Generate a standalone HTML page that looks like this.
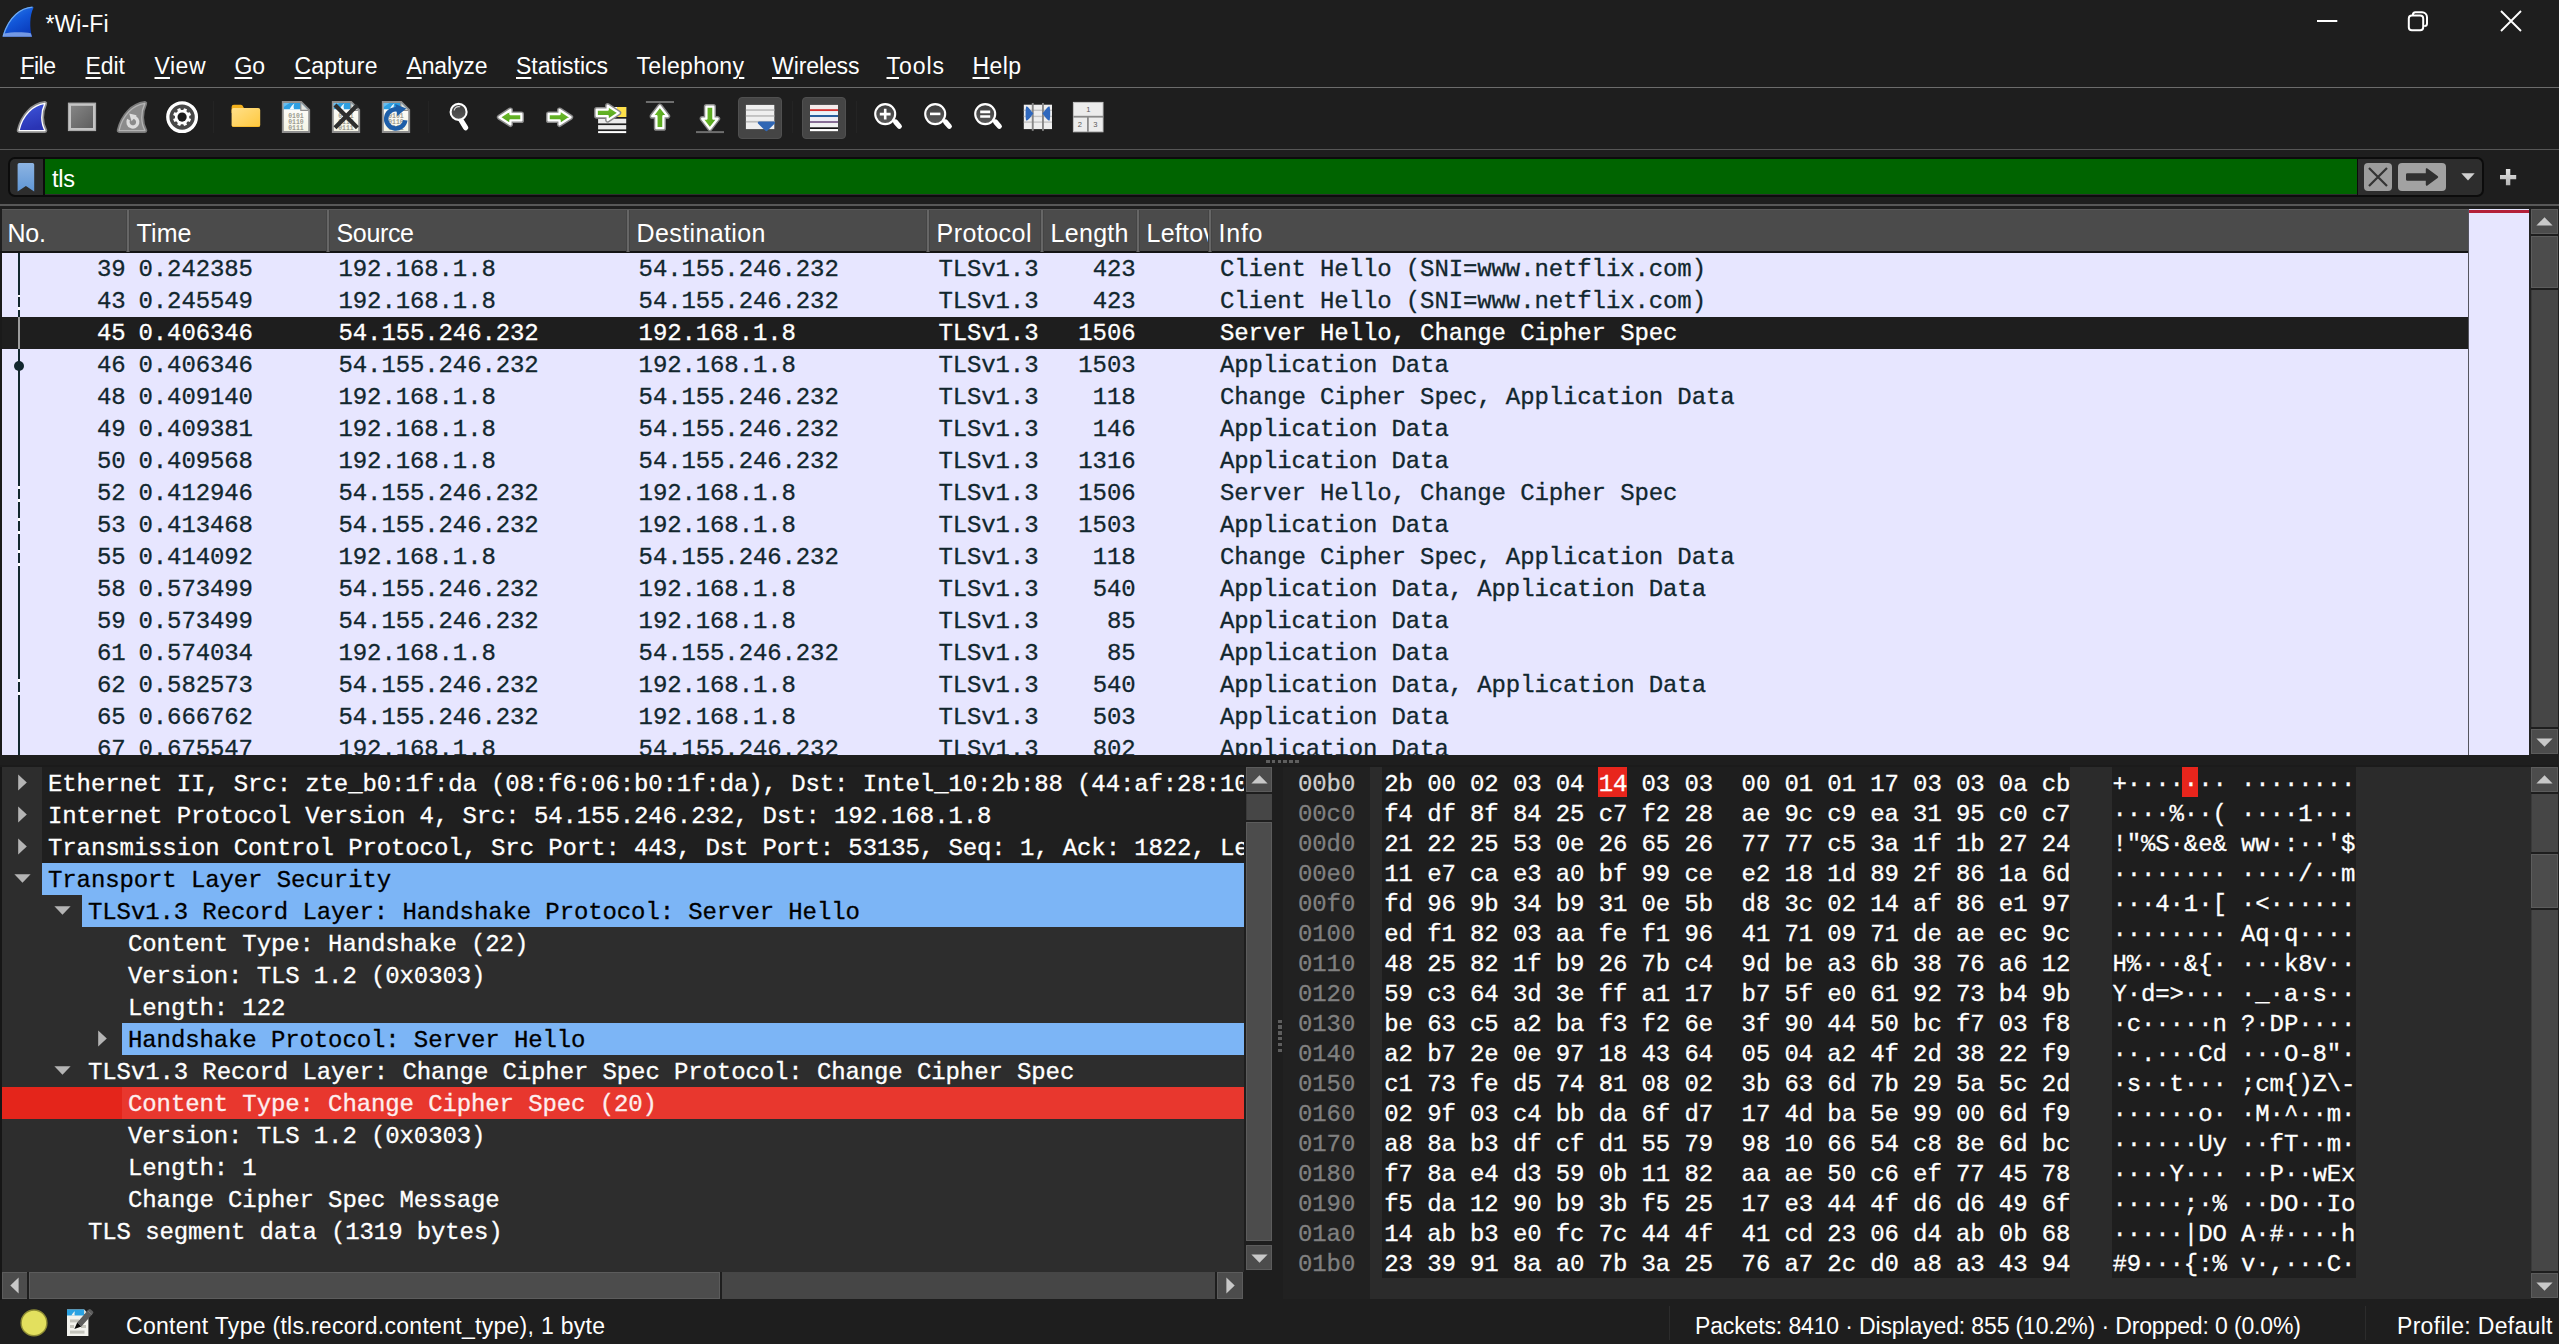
<!DOCTYPE html>
<html><head><meta charset="utf-8"><title>*Wi-Fi</title>
<style>
html,body{margin:0;padding:0}
body{width:2559px;height:1344px;background:#1e1e1e;position:relative;overflow:hidden;font-family:"Liberation Sans",sans-serif}
div,span,svg{position:absolute;box-sizing:border-box}
.s{font-family:"Liberation Sans",sans-serif;white-space:pre}
.s u{text-decoration:underline;text-decoration-thickness:2px;text-underline-offset:3px}
.m{font-family:"Liberation Mono",monospace;font-size:24px;letter-spacing:-0.11px;line-height:32px;white-space:pre;-webkit-text-stroke:0.3px currentColor}
.clip{overflow:hidden}
</style></head><body>

<svg style="left:0;top:4px" width="38" height="36" viewBox="0 0 38 36">
<defs><linearGradient id="tf" x1="0" y1="0" x2="0.6" y2="1"><stop offset="0" stop-color="#2f86ee"/><stop offset="0.55" stop-color="#1256d8"/><stop offset="1" stop-color="#0a3cbc"/></linearGradient></defs>
<path d="M32.6 2.8 C21 3.5 8.5 12 2.5 32.8 L32 32.8 C29.5 24 29.5 12 33.6 3.6 Z" fill="url(#tf)"/>
<path d="M32.4 3.2 C21 4 9 12.5 3.2 32" fill="none" stroke="#78b2f4" stroke-width="1.3" opacity="0.9"/>
<path d="M4.2 29.5 C12 27.8 24 28 30.8 29.2 L32 32.8 L2.5 32.8 Z" fill="#86a8ea" opacity="0.85"/>
</svg>
<span class="s" style="left:45.5px;top:8.03px;font-size:23px;line-height:32px;color:#fff;letter-spacing:0.083px;">*Wi-Fi</span>
<svg style="left:2300px;top:0" width="259" height="44" viewBox="0 0 259 44" fill="none" stroke="#fff" stroke-width="2">
<path d="M17 21 H37.3"/>
<path d="M112.9 15.2 V14.7 a2.5 2.5 0 0 1 2.5 -2.5 H122 a5 5 0 0 1 5 5 V23.4 a2.5 2.5 0 0 1 -2.5 2.5 H124.2" stroke-width="2"/>
<rect x="108.8" y="15.6" width="14.4" height="14.6" rx="3"/>
<path d="M201 11 L221 31 M221 11 L201 31" stroke-width="1.9"/>
</svg>
<span class="s" style="left:20.5px;top:50.03px;font-size:23px;line-height:32px;color:#fff;letter-spacing:-0.521px;"><u>F</u>ile</span>
<span class="s" style="left:85.5px;top:50.03px;font-size:23px;line-height:32px;color:#fff;letter-spacing:-0.044px;"><u>E</u>dit</span>
<span class="s" style="left:154.5px;top:50.03px;font-size:23px;line-height:32px;color:#fff;letter-spacing:0.521px;"><u>V</u>iew</span>
<span class="s" style="left:234.5px;top:50.03px;font-size:23px;line-height:32px;color:#fff;letter-spacing:-0.184px;"><u>G</u>o</span>
<span class="s" style="left:294.5px;top:50.03px;font-size:23px;line-height:32px;color:#fff;letter-spacing:0.195px;"><u>C</u>apture</span>
<span class="s" style="left:406.5px;top:50.03px;font-size:23px;line-height:32px;color:#fff;letter-spacing:-0.138px;"><u>A</u>nalyze</span>
<span class="s" style="left:516.0px;top:50.03px;font-size:23px;line-height:32px;color:#fff;letter-spacing:-0.003px;"><u>S</u>tatistics</span>
<span class="s" style="left:636.5px;top:50.03px;font-size:23px;line-height:32px;color:#fff;letter-spacing:0.329px;">Telephon<u>y</u></span>
<span class="s" style="left:772.0px;top:50.03px;font-size:23px;line-height:32px;color:#fff;letter-spacing:-0.096px;"><u>W</u>ireless</span>
<span class="s" style="left:886.5px;top:50.03px;font-size:23px;line-height:32px;color:#fff;letter-spacing:0.951px;"><u>T</u>ools</span>
<span class="s" style="left:972.5px;top:50.03px;font-size:23px;line-height:32px;color:#fff;letter-spacing:0.398px;"><u>H</u>elp</span>
<div style="left:0px;top:87px;width:2559px;height:1px;background:#6c6c6c;"></div>
<div style="left:0px;top:149px;width:2559px;height:1.2px;background:#565656;"></div>
<svg width="0" height="0" style="left:0;top:0"><defs>
<linearGradient id="gBlue" x1="0" y1="0" x2="0.3" y2="1"><stop offset="0" stop-color="#3f58de"/><stop offset="1" stop-color="#2a34b4"/></linearGradient>
<linearGradient id="gStop" x1="0" y1="0" x2="1" y2="1"><stop offset="0" stop-color="#858585"/><stop offset="1" stop-color="#5e5e5e"/></linearGradient>
<linearGradient id="gFold" x1="0" y1="0" x2="1" y2="1"><stop offset="0" stop-color="#ffe08a"/><stop offset="1" stop-color="#ffc83d"/></linearGradient>
<linearGradient id="gGreenH" x1="0" y1="0" x2="0" y2="1"><stop offset="0" stop-color="#74c22e"/><stop offset="1" stop-color="#4fa01c"/></linearGradient>
<linearGradient id="gGreenV" x1="0" y1="0" x2="1" y2="0"><stop offset="0" stop-color="#74c22e"/><stop offset="1" stop-color="#4c9c1a"/></linearGradient>
<linearGradient id="gLens" x1="0" y1="0" x2="0" y2="1"><stop offset="0" stop-color="#3e3e3e"/><stop offset="1" stop-color="#5a5a5a"/></linearGradient>
<linearGradient id="gPage" x1="0" y1="0" x2="0" y2="1"><stop offset="0" stop-color="#ffffff"/><stop offset="1" stop-color="#f4f3e4"/></linearGradient>
</defs></svg>
<div style="left:738px;top:97px;width:44px;height:42px;background:#454545;border-radius:4px;border:1px solid #505050;"></div>
<div style="left:802px;top:97px;width:44px;height:42px;background:#454545;border-radius:4px;border:1px solid #505050;"></div>
<div style="left:213px;top:101px;width:1px;height:32px;background:#242424;"></div>
<div style="left:428px;top:101px;width:1px;height:32px;background:#242424;"></div>
<div style="left:792px;top:101px;width:1px;height:32px;background:#242424;"></div>
<div style="left:856px;top:101px;width:1px;height:32px;background:#242424;"></div>
<svg style="left:16px;top:101px;overflow:visible" width="32" height="32" viewBox="0 0 32 32"><path d="M28.9 2.4 C17 4 6.5 14 3 29.6 L29 29.6 C24.8 22 24.6 11.5 28.9 2.4 Z" fill="none" stroke="#8c8c8c" stroke-width="4.6" stroke-linejoin="round"/>
<path d="M28.9 2.4 C17 4 6.5 14 3 29.6 L29 29.6 C24.8 22 24.6 11.5 28.9 2.4 Z" fill="url(#gBlue)" stroke="#ffffff" stroke-width="1.3" stroke-linejoin="round"/></svg>
<svg style="left:66px;top:101px;overflow:visible" width="32" height="32" viewBox="0 0 32 32"><rect x="1.9" y="1.7" width="28.2" height="28.4" fill="#c6c6c6"/>
<rect x="2.6" y="2.4" width="26.8" height="27" fill="none" stroke="#a8a8a8" stroke-width="1"/>
<rect x="5" y="4.8" width="22" height="22.2" fill="url(#gStop)"/></svg>
<svg style="left:116px;top:101px;overflow:visible" width="32" height="32" viewBox="0 0 32 32"><path d="M28.9 2.4 C17 4 6.5 14 3 29.6 L29 29.6 C24.8 22 24.6 11.5 28.9 2.4 Z" fill="none" stroke="#7a7a7a" stroke-width="4.6" stroke-linejoin="round"/>
<path d="M28.9 2.4 C17 4 6.5 14 3 29.6 L29 29.6 C24.8 22 24.6 11.5 28.9 2.4 Z" fill="#8b8b8b" stroke="#b4b4b4" stroke-width="1.3" stroke-linejoin="round"/>
<path d="M12.6 18.6 A4.9 4.9 0 1 0 17.4 16.2" fill="none" stroke="#dcdcdc" stroke-width="3.3"/>
<path d="M13.2 12.6 L20.6 14.2 L15.6 20.2 Z" fill="#dcdcdc"/></svg>
<svg style="left:166px;top:101px;overflow:visible" width="32" height="32" viewBox="0 0 32 32"><circle cx="16.1" cy="16.1" r="14.3" fill="#484848" stroke="#ffffff" stroke-width="3.3"/>
<path d="M25.16 14.52 L25.16 17.68 L23.10 17.78 L22.24 19.86 L23.63 21.39 L21.39 23.63 L19.86 22.24 L17.78 23.10 L17.68 25.16 L14.52 25.16 L14.42 23.10 L12.34 22.24 L10.81 23.63 L8.57 21.39 L9.96 19.86 L9.10 17.78 L7.04 17.68 L7.04 14.52 L9.10 14.42 L9.96 12.34 L8.57 10.81 L10.81 8.57 L12.34 9.96 L14.42 9.10 L14.52 7.04 L17.68 7.04 L17.78 9.10 L19.86 9.96 L21.39 8.57 L23.63 10.81 L22.24 12.34 L23.10 14.42 Z" fill="#ffffff" transform="rotate(22.5 16.1 16.1)"/>
<circle cx="16.1" cy="16.1" r="4.6" fill="#1c1c1c"/></svg>
<svg style="left:230px;top:101px;overflow:visible" width="32" height="32" viewBox="0 0 32 32"><path d="M1.6 6 a2.3 2.3 0 0 1 2.3 -2.3 H10.6 a2.4 2.4 0 0 1 1.9 0.9 L13.9 7 H20 V12 H1.6 Z" fill="#f2b01c"/>
<rect x="1.6" y="6.9" width="28.6" height="19.2" rx="2" fill="url(#gFold)"/>
<path d="M3.6 26.1 H28.2 a2 2 0 0 0 2 -2 V23.4 a2 2 0 0 1 -2 2 H3.6 a2 2 0 0 1 -2 -2 V24.1 a2 2 0 0 0 2 2 Z" fill="#f0a80e"/></svg>
<svg style="left:280px;top:101px;overflow:visible" width="32" height="32" viewBox="0 0 32 32"><path d="M2.8 1 H21.2 L29.2 9 V31 H2.8 Z" fill="url(#gPage)" stroke="#8f8f8f" stroke-width="1.9" stroke-linejoin="miter"/>
<path d="M3.8 2 H20.8 L27 8.2 H3.8 Z" fill="#2d9fe2"/>
<path d="M3.8 2 H9.5 L3.8 6 Z" fill="#66bdf0"/>
<path d="M9.6 8.2 C11 5.4 12.6 3.6 14.4 2.4 C13.4 4.6 13.4 6.4 14.2 8.2 Z" fill="#f4fbff"/>
<path d="M20.8 2 L20.8 9.4 L28.2 9.4" fill="#e6e6e0" stroke="#8f8f8f" stroke-width="1.2"/><g fill="#9c9c92" font-family="Liberation Mono" font-size="6.8" font-weight="bold"><text x="8.2" y="16.9" textLength="15.5" lengthAdjust="spacingAndGlyphs">0101</text><text x="8.2" y="23.0" textLength="15.5" lengthAdjust="spacingAndGlyphs">0110</text><text x="8.2" y="29.1" textLength="15.5" lengthAdjust="spacingAndGlyphs">0111</text></g></svg>
<svg style="left:330px;top:101px;overflow:visible" width="32" height="32" viewBox="0 0 32 32"><path d="M2.8 1 H21.2 L29.2 9 V31 H2.8 Z" fill="url(#gPage)" stroke="#8f8f8f" stroke-width="1.9" stroke-linejoin="miter"/>
<path d="M3.8 2 H20.8 L27 8.2 H3.8 Z" fill="#2d9fe2"/>
<path d="M3.8 2 H9.5 L3.8 6 Z" fill="#66bdf0"/>
<path d="M9.6 8.2 C11 5.4 12.6 3.6 14.4 2.4 C13.4 4.6 13.4 6.4 14.2 8.2 Z" fill="#f4fbff"/>
<path d="M20.8 2 L20.8 9.4 L28.2 9.4" fill="#e6e6e0" stroke="#8f8f8f" stroke-width="1.2"/><g fill="#9c9c92" font-family="Liberation Mono" font-size="6.8" font-weight="bold"><text x="8.2" y="16.9" textLength="15.5" lengthAdjust="spacingAndGlyphs">0101</text><text x="8.2" y="23.0" textLength="15.5" lengthAdjust="spacingAndGlyphs">0110</text><text x="8.2" y="29.1" textLength="15.5" lengthAdjust="spacingAndGlyphs">0111</text></g><path d="M5 4 L27.4 26.8 M27.4 4 L5 26.8" stroke="#2e2e2e" stroke-width="4.2" fill="none"/></svg>
<svg style="left:380px;top:101px;overflow:visible" width="32" height="32" viewBox="0 0 32 32"><path d="M2.8 1 H21.2 L29.2 9 V31 H2.8 Z" fill="url(#gPage)" stroke="#8f8f8f" stroke-width="1.9" stroke-linejoin="miter"/>
<path d="M3.8 2 H20.8 L27 8.2 H3.8 Z" fill="#2d9fe2"/>
<path d="M3.8 2 H9.5 L3.8 6 Z" fill="#66bdf0"/>
<path d="M9.6 8.2 C11 5.4 12.6 3.6 14.4 2.4 C13.4 4.6 13.4 6.4 14.2 8.2 Z" fill="#f4fbff"/>
<path d="M20.8 2 L20.8 9.4 L28.2 9.4" fill="#e6e6e0" stroke="#8f8f8f" stroke-width="1.2"/><g fill="#9c9c92" font-family="Liberation Mono" font-size="6.8" font-weight="bold"><text x="8.2" y="16.9" textLength="15.5" lengthAdjust="spacingAndGlyphs">0101</text><text x="8.2" y="23.0" textLength="15.5" lengthAdjust="spacingAndGlyphs">0110</text><text x="8.2" y="29.1" textLength="15.5" lengthAdjust="spacingAndGlyphs">0111</text></g><path d="M25.3 19.2 A9.6 9.6 0 1 1 18.6 8.7" fill="none" stroke="#1d5ea8" stroke-width="4.5"/>
<path d="M15.2 3 L26.2 7.4 L17.4 15 Z" fill="#1d5ea8"/></svg>
<svg style="left:444px;top:101px;overflow:visible" width="32" height="32" viewBox="0 0 32 32"><g transform="translate(2.2 -0.3)"><path d="M13.8 17.8 L19.4 27" stroke="#ffffff" stroke-width="5.2" stroke-linecap="round" fill="none"/>
<circle cx="12.4" cy="11.2" r="8" fill="url(#gLens)" stroke="#ffffff" stroke-width="2.1"/>
<path d="M8 9.4 A5 5 0 0 1 13.6 6" fill="none" stroke="#d8d8d8" stroke-width="1.1" stroke-linecap="round"/></g></svg>
<svg style="left:494px;top:101px;overflow:visible" width="32" height="32" viewBox="0 0 32 32"><g transform="translate(32 0) scale(-1 1)"><g transform="translate(0 0) scale(1)"><path d="M4.6 13 H15.6 V9 L26.6 16.2 L15.6 23.4 V19.4 H4.6 Z" fill="none" stroke="#8a8a8a" stroke-width="5.2" stroke-linejoin="round"/>
<path d="M4.6 13 H15.6 V9 L26.6 16.2 L15.6 23.4 V19.4 H4.6 Z" fill="url(#gGreenH)" stroke="#ffffff" stroke-width="2.3" stroke-linejoin="round"/></g></g></svg>
<svg style="left:544px;top:101px;overflow:visible" width="32" height="32" viewBox="0 0 32 32"><g transform="translate(0 0) scale(1)"><path d="M4.6 13 H15.6 V9 L26.6 16.2 L15.6 23.4 V19.4 H4.6 Z" fill="none" stroke="#8a8a8a" stroke-width="5.2" stroke-linejoin="round"/>
<path d="M4.6 13 H15.6 V9 L26.6 16.2 L15.6 23.4 V19.4 H4.6 Z" fill="url(#gGreenH)" stroke="#ffffff" stroke-width="2.3" stroke-linejoin="round"/></g></svg>
<svg style="left:594px;top:101px;overflow:visible" width="32" height="32" viewBox="0 0 32 32"><rect x="4.1" y="6" width="28.1" height="10" fill="#ffffff"/>
<rect x="23" y="6" width="9.2" height="10" fill="#ffe14a"/>
<rect x="4.1" y="17.7" width="28.1" height="4.7" fill="#ececec"/>
<rect x="4.1" y="24.1" width="28.1" height="4.3" fill="#ececec"/>
<rect x="4.1" y="30.1" width="28.1" height="2" fill="#ffffff"/>
<g transform="translate(-1.9 -4.3)"><path d="M4.6 13 H15.6 V9 L26.6 16.2 L15.6 23.4 V19.4 H4.6 Z" fill="none" stroke="#8a8a8a" stroke-width="5.2" stroke-linejoin="round"/>
<path d="M4.6 13 H15.6 V9 L26.6 16.2 L15.6 23.4 V19.4 H4.6 Z" fill="url(#gGreenH)" stroke="#ffffff" stroke-width="2.3" stroke-linejoin="round"/></g></svg>
<svg style="left:644px;top:101px;overflow:visible" width="32" height="32" viewBox="0 0 32 32"><rect x="1.9" y="0" width="28.1" height="2" fill="#6e6e6e"/>
<path d="M15.9 5.2 L23.6 15.2 H19.4 V27.2 H12.4 V15.2 H8.2 Z" fill="none" stroke="#8a8a8a" stroke-width="5.2" stroke-linejoin="round"/>
<path d="M15.9 5.2 L23.6 15.2 H19.4 V27.2 H12.4 V15.2 H8.2 Z" fill="url(#gGreenV)" stroke="#ffffff" stroke-width="2.3" stroke-linejoin="round"/></svg>
<svg style="left:694px;top:101px;overflow:visible" width="32" height="32" viewBox="0 0 32 32"><rect x="2" y="30.1" width="28" height="2" fill="#6e6e6e"/>
<g transform="translate(0 32.9) scale(1 -1)"><path d="M15.9 5.2 L23.6 15.2 H19.4 V27.2 H12.4 V15.2 H8.2 Z" fill="none" stroke="#8a8a8a" stroke-width="5.2" stroke-linejoin="round"/>
<path d="M15.9 5.2 L23.6 15.2 H19.4 V27.2 H12.4 V15.2 H8.2 Z" fill="url(#gGreenV)" stroke="#ffffff" stroke-width="2.3" stroke-linejoin="round"/></g></svg>
<svg style="left:744px;top:101px;overflow:visible" width="32" height="32" viewBox="0 0 32 32"><rect x="1.9" y="3.9" width="28.4" height="24.2" fill="#efefef"/>
<rect x="1.9" y="8.2" width="28.4" height="1.7" fill="#bdbdbd"/>
<rect x="1.9" y="14.1" width="28.4" height="1.7" fill="#bdbdbd"/>
<rect x="1.9" y="19.9" width="28.4" height="1.7" fill="#bdbdbd"/>
<path d="M15 20.6 H29.8 a1.2 1.2 0 0 1 1 1.9 L23.6 29.6 a1.6 1.6 0 0 1 -2.4 0 L14 22.5 a1.2 1.2 0 0 1 1 -1.9 Z" fill="#2f66b4"/></svg>
<svg style="left:808px;top:101px;overflow:visible" width="32" height="32" viewBox="0 0 32 32"><rect x="2" y="3.9" width="28" height="26.2" fill="#f4ecec"/>
<rect x="2" y="8.2" width="28" height="2" fill="#d43030"/>
<rect x="2" y="10.2" width="28" height="3.8" fill="#e9f3fb"/>
<rect x="2" y="14" width="28" height="2.1" fill="#2a5d9c"/>
<rect x="2" y="16.1" width="28" height="4" fill="#f1eef6"/>
<rect x="2" y="20.2" width="28" height="1.7" fill="#6e4f80"/>
<rect x="2" y="21.9" width="28" height="4.4" fill="#f2f2f2"/>
<rect x="2" y="26.3" width="28" height="1.8" fill="#151515"/>
<rect x="2" y="28.1" width="28" height="2" fill="#ffffff"/></svg>
<svg style="left:872px;top:101px;overflow:visible" width="32" height="32" viewBox="0 0 32 32"><path d="M23.6 21 L27.4 25.4" stroke="#ffffff" stroke-width="5" stroke-linecap="round" fill="none"/>
<path d="M19 17 L24 21.6" stroke="#ffffff" stroke-width="3" fill="none"/>
<circle cx="13.2" cy="13.1" r="10" fill="url(#gLens)" stroke="#ffffff" stroke-width="2.1"/><path d="M7.8 13.1 H18.6 M13.2 7.7 V18.5" stroke="#ffffff" stroke-width="2.6" fill="none"/></svg>
<svg style="left:922px;top:101px;overflow:visible" width="32" height="32" viewBox="0 0 32 32"><path d="M23.6 21 L27.4 25.4" stroke="#ffffff" stroke-width="5" stroke-linecap="round" fill="none"/>
<path d="M19 17 L24 21.6" stroke="#ffffff" stroke-width="3" fill="none"/>
<circle cx="13.2" cy="13.1" r="10" fill="url(#gLens)" stroke="#ffffff" stroke-width="2.1"/><path d="M8 12.9 H18.4" stroke="#ffffff" stroke-width="2.6" fill="none"/></svg>
<svg style="left:972px;top:101px;overflow:visible" width="32" height="32" viewBox="0 0 32 32"><path d="M23.6 21 L27.4 25.4" stroke="#ffffff" stroke-width="5" stroke-linecap="round" fill="none"/>
<path d="M19 17 L24 21.6" stroke="#ffffff" stroke-width="3" fill="none"/>
<circle cx="13.2" cy="13.1" r="10" fill="url(#gLens)" stroke="#ffffff" stroke-width="2.1"/><path d="M8.2 10.9 H18.2 M8.2 15.5 H18.2" stroke="#ffffff" stroke-width="2.6" fill="none"/></svg>
<svg style="left:1022px;top:101px;overflow:visible" width="32" height="32" viewBox="0 0 32 32"><rect x="1.8" y="3.7" width="28.2" height="24.4" fill="#eeeeee"/>
<rect x="1.8" y="8.6" width="28.2" height="1.4" fill="#c4c4c4"/>
<rect x="1.8" y="14.7" width="28.2" height="1.4" fill="#c4c4c4"/>
<rect x="1.8" y="20.4" width="28.2" height="1.4" fill="#c4c4c4"/>
<rect x="9.8" y="2" width="1.9" height="27.8" fill="#878787"/>
<rect x="20" y="2" width="1.9" height="27.8" fill="#878787"/>
<path d="M4.2 5.4 C6 5.4 7 7 11.4 12.4 C7 17.8 6 19.6 4.2 19.6 C3.4 17 3.4 8 4.2 5.4 Z" fill="#2f68bd"/>
<path d="M27.6 5.4 C25.8 5.4 24.8 7 20.4 12.4 C24.8 17.8 25.8 19.6 27.6 19.6 C28.4 17 28.4 8 27.6 5.4 Z" fill="#2f68bd"/></svg>
<svg style="left:1072px;top:101px;overflow:visible" width="32" height="32" viewBox="0 0 32 32"><rect x="1.4" y="1.4" width="29.6" height="29.4" fill="#ececec" stroke="#c2c2c2" stroke-width="1"/>
<rect x="1.4" y="14.8" width="29.6" height="1.8" fill="#8a8a8a"/>
<rect x="15" y="15.6" width="1.8" height="15.2" fill="#8a8a8a"/>
<g fill="#5a5a5a" font-family="Liberation Sans" font-size="7.6">
<text x="14.2" y="11.2">1</text><text x="5.8" y="26.2">2</text><text x="21.2" y="26.2">3</text></g></svg>
<div style="left:8px;top:157px;width:2476px;height:40px;background:#0c0c0c;border-radius:7px;"></div>
<div style="left:10px;top:159px;width:2472px;height:36px;background:#2d2d2d;border-radius:5px;"></div>
<div style="left:44.5px;top:159.3px;width:2312.3px;height:35.2px;background:#006400;"></div>
<div style="left:43px;top:159px;width:1.5px;height:36px;background:#0c0c0c;"></div>
<div style="left:2356.8px;top:159px;width:1.5px;height:36px;background:#0c0c0c;"></div>
<svg style="left:16px;top:162px" width="20" height="30" viewBox="0 0 20 30"><defs><linearGradient id="bm" x1="0" y1="0" x2="0" y2="1"><stop offset="0" stop-color="#8db4e2"/><stop offset="1" stop-color="#5f96d6"/></linearGradient></defs><path d="M1.6 2.6 a1.6 1.6 0 0 1 1.6 -1.6 H16.6 a1.6 1.6 0 0 1 1.6 1.6 V29.6 L9.9 24 L1.6 29.6 Z" fill="url(#bm)"/></svg>
<span class="s" style="left:52px;top:162.76px;font-size:23.5px;line-height:33px;color:#fff;letter-spacing:-0.250px;">tls</span>
<div style="left:2364px;top:163px;width:28px;height:28px;background:#9d9d9d;border-radius:4px;"></div>
<svg style="left:2364px;top:163px" width="28" height="28" viewBox="0 0 28 28"><path d="M5 5 L23 23 M23 5 L5 23" stroke="#333" stroke-width="2.2" fill="none"/></svg>
<div style="left:2398px;top:163px;width:48.3px;height:28px;background:#a2a2a2;border-radius:4px;"></div>
<svg style="left:2398px;top:163px" width="48" height="28" viewBox="0 0 48 28"><path d="M9.4 10.2 H27.8 V6.2 a1 1 0 0 1 1.6 -0.8 L39.6 12.9 a1.4 1.4 0 0 1 0 2.2 L29.4 22.6 a1 1 0 0 1 -1.6 -0.8 V17.8 H9.4 a1.4 1.4 0 0 1 -1.4 -1.4 V11.6 a1.4 1.4 0 0 1 1.4 -1.4 Z" fill="#303030"/></svg>
<svg style="left:2461px;top:173px" width="14" height="8" viewBox="0 0 14 8"><path d="M0.3 0.2 H13.7 L7 7.4 Z" fill="#d0d0d0"/></svg>
<svg style="left:2499px;top:168px" width="18" height="18" viewBox="0 0 18 18"><defs><linearGradient id="pl" x1="0" y1="0" x2="0" y2="1"><stop offset="0" stop-color="#e4e4e4"/><stop offset="1" stop-color="#b4b4b4"/></linearGradient></defs><path d="M6.9 1 H11.3 V6.9 H17.2 V11.3 H11.3 V17.2 H6.9 V11.3 H1 V6.9 H6.9 Z" fill="url(#pl)"/></svg>
<div style="left:0px;top:204px;width:2559px;height:2.4px;background:#585858;"></div>
<div style="left:2px;top:209px;width:2466px;height:42px;background:#4b4b4b;"></div>
<div style="left:2px;top:209px;width:2466px;height:1px;background:#5a5a5a;"></div>
<div style="left:0px;top:250.6px;width:2468px;height:2.4px;background:#141414;"></div>
<span class="s" style="left:7.4px;top:215.64px;font-size:25px;line-height:35px;color:#fff;letter-spacing:-0.151px;">No.</span>
<span class="s" style="left:136.5px;top:215.64px;font-size:25px;line-height:35px;color:#fff;letter-spacing:0.125px;">Time</span>
<span class="s" style="left:336.5px;top:215.64px;font-size:25px;line-height:35px;color:#fff;letter-spacing:-0.341px;">Source</span>
<span class="s" style="left:636.5px;top:215.64px;font-size:25px;line-height:35px;color:#fff;letter-spacing:0.393px;">Destination</span>
<span class="s" style="left:936.5px;top:215.64px;font-size:25px;line-height:35px;color:#fff;letter-spacing:0.470px;">Protocol</span>
<span class="s" style="left:1050.5px;top:215.64px;font-size:25px;line-height:35px;color:#fff;letter-spacing:0.309px;">Length</span>
<div class="clip" style="left:1146.5px;top:209px;width:62.09999999999991px;height:42px">
<span class="s" style="left:0px;top:6.64px;font-size:25px;line-height:35px;color:#fff;letter-spacing:0.239px;">Leftover</span>
</div>
<span class="s" style="left:1218.5px;top:215.64px;font-size:25px;line-height:35px;color:#fff;letter-spacing:0.768px;">Info</span>
<div style="left:126.3px;top:210px;width:4px;height:42px;background:#444444;"></div>
<div style="left:127.3px;top:210px;width:1.8px;height:42px;background:#666666;"></div>
<div style="left:326.3px;top:210px;width:4px;height:42px;background:#444444;"></div>
<div style="left:327.3px;top:210px;width:1.8px;height:42px;background:#666666;"></div>
<div style="left:626.3px;top:210px;width:4px;height:42px;background:#444444;"></div>
<div style="left:627.3px;top:210px;width:1.8px;height:42px;background:#666666;"></div>
<div style="left:926.3px;top:210px;width:4px;height:42px;background:#444444;"></div>
<div style="left:927.3px;top:210px;width:1.8px;height:42px;background:#666666;"></div>
<div style="left:1040.3px;top:210px;width:4px;height:42px;background:#444444;"></div>
<div style="left:1041.3px;top:210px;width:1.8px;height:42px;background:#666666;"></div>
<div style="left:1136.4px;top:210px;width:4px;height:42px;background:#444444;"></div>
<div style="left:1137.4px;top:210px;width:1.8px;height:42px;background:#666666;"></div>
<div style="left:1208.3px;top:210px;width:4px;height:42px;background:#444444;"></div>
<div style="left:1209.3px;top:210px;width:1.8px;height:42px;background:#666666;"></div>
<div style="left:0px;top:253px;width:2px;height:502px;background:#1a1a1a;"></div>
<div style="left:2px;top:253px;width:2466px;height:502px;background:#e7e6ff;"></div>
<div class="clip" style="left:2px;top:253px;width:2466px;height:502px">
<span class="m" style="left:95.02px;top:1.46px;color:#12272e;">39</span>
<span class="m" style="left:136.5px;top:1.46px;color:#12272e;">0.242385</span>
<span class="m" style="left:336.5px;top:1.46px;color:#12272e;">192.168.1.8</span>
<span class="m" style="left:636.6px;top:1.46px;color:#12272e;">54.155.246.232</span>
<span class="m" style="left:936.4px;top:1.46px;color:#12272e;">TLSv1.3</span>
<span class="m" style="left:1090.63px;top:1.46px;color:#12272e;">423</span>
<span class="m" style="left:1218px;top:1.46px;color:#12272e;">Client Hello (SNI=www.netflix.com)</span>
<span class="m" style="left:95.02px;top:33.46px;color:#12272e;">43</span>
<span class="m" style="left:136.5px;top:33.46px;color:#12272e;">0.245549</span>
<span class="m" style="left:336.5px;top:33.46px;color:#12272e;">192.168.1.8</span>
<span class="m" style="left:636.6px;top:33.46px;color:#12272e;">54.155.246.232</span>
<span class="m" style="left:936.4px;top:33.46px;color:#12272e;">TLSv1.3</span>
<span class="m" style="left:1090.63px;top:33.46px;color:#12272e;">423</span>
<span class="m" style="left:1218px;top:33.46px;color:#12272e;">Client Hello (SNI=www.netflix.com)</span>
<div style="left:0px;top:64px;width:2466px;height:32px;background:#1e1e1e;"></div>
<span class="m" style="left:95.02px;top:65.46px;color:#ffffff;">45</span>
<span class="m" style="left:136.5px;top:65.46px;color:#ffffff;">0.406346</span>
<span class="m" style="left:336.5px;top:65.46px;color:#ffffff;">54.155.246.232</span>
<span class="m" style="left:636.6px;top:65.46px;color:#ffffff;">192.168.1.8</span>
<span class="m" style="left:936.4px;top:65.46px;color:#ffffff;">TLSv1.3</span>
<span class="m" style="left:1076.34px;top:65.46px;color:#ffffff;">1506</span>
<span class="m" style="left:1218px;top:65.46px;color:#ffffff;">Server Hello, Change Cipher Spec</span>
<span class="m" style="left:95.02px;top:97.46px;color:#12272e;">46</span>
<span class="m" style="left:136.5px;top:97.46px;color:#12272e;">0.406346</span>
<span class="m" style="left:336.5px;top:97.46px;color:#12272e;">54.155.246.232</span>
<span class="m" style="left:636.6px;top:97.46px;color:#12272e;">192.168.1.8</span>
<span class="m" style="left:936.4px;top:97.46px;color:#12272e;">TLSv1.3</span>
<span class="m" style="left:1076.34px;top:97.46px;color:#12272e;">1503</span>
<span class="m" style="left:1218px;top:97.46px;color:#12272e;">Application Data</span>
<span class="m" style="left:95.02px;top:129.46px;color:#12272e;">48</span>
<span class="m" style="left:136.5px;top:129.46px;color:#12272e;">0.409140</span>
<span class="m" style="left:336.5px;top:129.46px;color:#12272e;">192.168.1.8</span>
<span class="m" style="left:636.6px;top:129.46px;color:#12272e;">54.155.246.232</span>
<span class="m" style="left:936.4px;top:129.46px;color:#12272e;">TLSv1.3</span>
<span class="m" style="left:1090.63px;top:129.46px;color:#12272e;">118</span>
<span class="m" style="left:1218px;top:129.46px;color:#12272e;">Change Cipher Spec, Application Data</span>
<span class="m" style="left:95.02px;top:161.46px;color:#12272e;">49</span>
<span class="m" style="left:136.5px;top:161.46px;color:#12272e;">0.409381</span>
<span class="m" style="left:336.5px;top:161.46px;color:#12272e;">192.168.1.8</span>
<span class="m" style="left:636.6px;top:161.46px;color:#12272e;">54.155.246.232</span>
<span class="m" style="left:936.4px;top:161.46px;color:#12272e;">TLSv1.3</span>
<span class="m" style="left:1090.63px;top:161.46px;color:#12272e;">146</span>
<span class="m" style="left:1218px;top:161.46px;color:#12272e;">Application Data</span>
<span class="m" style="left:95.02px;top:193.46px;color:#12272e;">50</span>
<span class="m" style="left:136.5px;top:193.46px;color:#12272e;">0.409568</span>
<span class="m" style="left:336.5px;top:193.46px;color:#12272e;">192.168.1.8</span>
<span class="m" style="left:636.6px;top:193.46px;color:#12272e;">54.155.246.232</span>
<span class="m" style="left:936.4px;top:193.46px;color:#12272e;">TLSv1.3</span>
<span class="m" style="left:1076.34px;top:193.46px;color:#12272e;">1316</span>
<span class="m" style="left:1218px;top:193.46px;color:#12272e;">Application Data</span>
<span class="m" style="left:95.02px;top:225.46px;color:#12272e;">52</span>
<span class="m" style="left:136.5px;top:225.46px;color:#12272e;">0.412946</span>
<span class="m" style="left:336.5px;top:225.46px;color:#12272e;">54.155.246.232</span>
<span class="m" style="left:636.6px;top:225.46px;color:#12272e;">192.168.1.8</span>
<span class="m" style="left:936.4px;top:225.46px;color:#12272e;">TLSv1.3</span>
<span class="m" style="left:1076.34px;top:225.46px;color:#12272e;">1506</span>
<span class="m" style="left:1218px;top:225.46px;color:#12272e;">Server Hello, Change Cipher Spec</span>
<span class="m" style="left:95.02px;top:257.46px;color:#12272e;">53</span>
<span class="m" style="left:136.5px;top:257.46px;color:#12272e;">0.413468</span>
<span class="m" style="left:336.5px;top:257.46px;color:#12272e;">54.155.246.232</span>
<span class="m" style="left:636.6px;top:257.46px;color:#12272e;">192.168.1.8</span>
<span class="m" style="left:936.4px;top:257.46px;color:#12272e;">TLSv1.3</span>
<span class="m" style="left:1076.34px;top:257.46px;color:#12272e;">1503</span>
<span class="m" style="left:1218px;top:257.46px;color:#12272e;">Application Data</span>
<span class="m" style="left:95.02px;top:289.46px;color:#12272e;">55</span>
<span class="m" style="left:136.5px;top:289.46px;color:#12272e;">0.414092</span>
<span class="m" style="left:336.5px;top:289.46px;color:#12272e;">192.168.1.8</span>
<span class="m" style="left:636.6px;top:289.46px;color:#12272e;">54.155.246.232</span>
<span class="m" style="left:936.4px;top:289.46px;color:#12272e;">TLSv1.3</span>
<span class="m" style="left:1090.63px;top:289.46px;color:#12272e;">118</span>
<span class="m" style="left:1218px;top:289.46px;color:#12272e;">Change Cipher Spec, Application Data</span>
<span class="m" style="left:95.02px;top:321.46px;color:#12272e;">58</span>
<span class="m" style="left:136.5px;top:321.46px;color:#12272e;">0.573499</span>
<span class="m" style="left:336.5px;top:321.46px;color:#12272e;">54.155.246.232</span>
<span class="m" style="left:636.6px;top:321.46px;color:#12272e;">192.168.1.8</span>
<span class="m" style="left:936.4px;top:321.46px;color:#12272e;">TLSv1.3</span>
<span class="m" style="left:1090.63px;top:321.46px;color:#12272e;">540</span>
<span class="m" style="left:1218px;top:321.46px;color:#12272e;">Application Data, Application Data</span>
<span class="m" style="left:95.02px;top:353.46px;color:#12272e;">59</span>
<span class="m" style="left:136.5px;top:353.46px;color:#12272e;">0.573499</span>
<span class="m" style="left:336.5px;top:353.46px;color:#12272e;">54.155.246.232</span>
<span class="m" style="left:636.6px;top:353.46px;color:#12272e;">192.168.1.8</span>
<span class="m" style="left:936.4px;top:353.46px;color:#12272e;">TLSv1.3</span>
<span class="m" style="left:1104.92px;top:353.46px;color:#12272e;">85</span>
<span class="m" style="left:1218px;top:353.46px;color:#12272e;">Application Data</span>
<span class="m" style="left:95.02px;top:385.46px;color:#12272e;">61</span>
<span class="m" style="left:136.5px;top:385.46px;color:#12272e;">0.574034</span>
<span class="m" style="left:336.5px;top:385.46px;color:#12272e;">192.168.1.8</span>
<span class="m" style="left:636.6px;top:385.46px;color:#12272e;">54.155.246.232</span>
<span class="m" style="left:936.4px;top:385.46px;color:#12272e;">TLSv1.3</span>
<span class="m" style="left:1104.92px;top:385.46px;color:#12272e;">85</span>
<span class="m" style="left:1218px;top:385.46px;color:#12272e;">Application Data</span>
<span class="m" style="left:95.02px;top:417.46px;color:#12272e;">62</span>
<span class="m" style="left:136.5px;top:417.46px;color:#12272e;">0.582573</span>
<span class="m" style="left:336.5px;top:417.46px;color:#12272e;">54.155.246.232</span>
<span class="m" style="left:636.6px;top:417.46px;color:#12272e;">192.168.1.8</span>
<span class="m" style="left:936.4px;top:417.46px;color:#12272e;">TLSv1.3</span>
<span class="m" style="left:1090.63px;top:417.46px;color:#12272e;">540</span>
<span class="m" style="left:1218px;top:417.46px;color:#12272e;">Application Data, Application Data</span>
<span class="m" style="left:95.02px;top:449.46px;color:#12272e;">65</span>
<span class="m" style="left:136.5px;top:449.46px;color:#12272e;">0.666762</span>
<span class="m" style="left:336.5px;top:449.46px;color:#12272e;">54.155.246.232</span>
<span class="m" style="left:636.6px;top:449.46px;color:#12272e;">192.168.1.8</span>
<span class="m" style="left:936.4px;top:449.46px;color:#12272e;">TLSv1.3</span>
<span class="m" style="left:1090.63px;top:449.46px;color:#12272e;">503</span>
<span class="m" style="left:1218px;top:449.46px;color:#12272e;">Application Data</span>
<span class="m" style="left:95.02px;top:481.46px;color:#12272e;">67</span>
<span class="m" style="left:136.5px;top:481.46px;color:#12272e;">0.675547</span>
<span class="m" style="left:336.5px;top:481.46px;color:#12272e;">192.168.1.8</span>
<span class="m" style="left:636.6px;top:481.46px;color:#12272e;">54.155.246.232</span>
<span class="m" style="left:936.4px;top:481.46px;color:#12272e;">TLSv1.3</span>
<span class="m" style="left:1090.63px;top:481.46px;color:#12272e;">802</span>
<span class="m" style="left:1218px;top:481.46px;color:#12272e;">Application Data</span>
<div style="left:16px;top:0px;width:2px;height:502px;background:#12272e;"></div>
<div style="left:16px;top:64px;width:2px;height:32px;background:#9c9c9c;"></div>
<div style="left:16px;top:41.5px;width:2px;height:2.6px;background:#ffffff;"></div>
<div style="left:16px;top:54px;width:2px;height:2.6px;background:#ffffff;"></div>
<div style="left:16px;top:233px;width:2px;height:2.6px;background:#ffffff;"></div>
<div style="left:16px;top:246px;width:2px;height:2.6px;background:#ffffff;"></div>
<div style="left:16px;top:265px;width:2px;height:2.6px;background:#ffffff;"></div>
<div style="left:16px;top:278px;width:2px;height:2.6px;background:#ffffff;"></div>
<div style="left:16px;top:297px;width:2px;height:2.6px;background:#ffffff;"></div>
<div style="left:16px;top:310px;width:2px;height:2.6px;background:#ffffff;"></div>
<div style="left:16px;top:426px;width:2px;height:2.6px;background:#ffffff;"></div>
<div style="left:16px;top:439px;width:2px;height:2.6px;background:#ffffff;"></div>
<div style="left:12px;top:107.5px;width:10px;height:10px;background:#12272e;border-radius:5px;"></div>
</div>
<div style="left:2468px;top:209px;width:1px;height:546px;background:#55555f;"></div>
<div style="left:2469px;top:209px;width:60px;height:546px;background:#e7e6ff;"></div>
<div style="left:2469px;top:210.4px;width:60px;height:2.6px;background:#b4203a;"></div>
<div style="left:2529px;top:209px;width:2px;height:546px;background:#222;"></div>
<div style="left:2531px;top:209px;width:27px;height:545px;background:#464646;"></div>
<div style="left:2531px;top:209px;width:1px;height:545px;background:#3a3a3a;"></div>
<div style="left:2531px;top:209px;width:27px;height:25px;background:#4c4c4c;border:1px solid #5c5c5c;"></div>
<svg style="left:2536px;top:217px" width="17" height="9" viewBox="0 0 17 9"><path d="M8.5 0.3 L16.6 8.6 H0.4 Z" fill="#c8c8c8"/></svg>
<div style="left:2531px;top:729px;width:27px;height:25px;background:#4c4c4c;border:1px solid #5c5c5c;"></div>
<svg style="left:2536px;top:737.5px" width="17" height="9" viewBox="0 0 17 9"><path d="M8.5 8.7 L16.6 0.4 H0.4 Z" fill="#c8c8c8"/></svg>
<div style="left:2531px;top:234px;width:27px;height:2px;background:#1e1e1e;"></div>
<div style="left:2531px;top:727px;width:27px;height:2px;background:#1e1e1e;"></div>
<div style="left:2531px;top:234px;width:27px;height:2px;background:#1e1e1e;"></div>
<div style="left:2531px;top:288px;width:27px;height:2px;background:#1e1e1e;"></div>
<div style="left:2531px;top:236px;width:27px;height:52px;background:#4c4c4c;border:1px solid #5c5c5c;"></div>
<div style="left:1266.0px;top:759.5px;width:3.6px;height:3.4px;background:#5e5e5e;"></div>
<div style="left:1271.8px;top:759.5px;width:3.6px;height:3.4px;background:#5e5e5e;"></div>
<div style="left:1277.6px;top:759.5px;width:3.6px;height:3.4px;background:#5e5e5e;"></div>
<div style="left:1283.4px;top:759.5px;width:3.6px;height:3.4px;background:#5e5e5e;"></div>
<div style="left:1289.2px;top:759.5px;width:3.6px;height:3.4px;background:#5e5e5e;"></div>
<div style="left:1295.0px;top:759.5px;width:3.6px;height:3.4px;background:#5e5e5e;"></div>
<div style="left:0px;top:765px;width:2px;height:535px;background:#161616;"></div>
<div style="left:0px;top:765px;width:2559px;height:2px;background:#1b1b1b;"></div>
<div style="left:2px;top:767px;width:1242.4px;height:505px;background:#2d2d2d;"></div>
<div class="clip" style="left:2px;top:767px;width:1242.4px;height:505px">
<div style="left:40px;top:0px;width:1300px;height:32px;background:#1f1f1f;"></div>
<svg style="left:16px;top:6.6px" width="9" height="17" viewBox="0 0 9 17"><path d="M0.2 0.4 L8.8 8.5 L0.2 16.6 Z" fill="#b4b4b4"/></svg>
<span class="m" style="left:46px;top:1.51px;color:#ffffff;">Ethernet II, Src: zte_b0:1f:da (08:f6:06:b0:1f:da), Dst: Intel_10:2b:88 (44:af:28:10:2b:88)</span>
<div style="left:40px;top:32px;width:1300px;height:32px;background:#1f1f1f;"></div>
<svg style="left:16px;top:38.6px" width="9" height="17" viewBox="0 0 9 17"><path d="M0.2 0.4 L8.8 8.5 L0.2 16.6 Z" fill="#b4b4b4"/></svg>
<span class="m" style="left:46px;top:33.51px;color:#ffffff;">Internet Protocol Version 4, Src: 54.155.246.232, Dst: 192.168.1.8</span>
<div style="left:40px;top:64px;width:1300px;height:32px;background:#1f1f1f;"></div>
<svg style="left:16px;top:70.6px" width="9" height="17" viewBox="0 0 9 17"><path d="M0.2 0.4 L8.8 8.5 L0.2 16.6 Z" fill="#b4b4b4"/></svg>
<span class="m" style="left:46px;top:65.51px;color:#ffffff;">Transmission Control Protocol, Src Port: 443, Dst Port: 53135, Seq: 1, Ack: 1822, Len: 1452</span>
<div style="left:40px;top:96px;width:1300px;height:32px;background:#7cb5f6;"></div>
<svg style="left:12px;top:107.2px" width="17" height="9" viewBox="0 0 17 9"><path d="M0.4 0.3 H16.6 L8.5 8.7 Z" fill="#b4b4b4"/></svg>
<span class="m" style="left:46px;top:97.51px;color:#000000;">Transport Layer Security</span>
<div style="left:80px;top:128px;width:1300px;height:32px;background:#7cb5f6;"></div>
<svg style="left:52px;top:139.2px" width="17" height="9" viewBox="0 0 17 9"><path d="M0.4 0.3 H16.6 L8.5 8.7 Z" fill="#b4b4b4"/></svg>
<span class="m" style="left:86px;top:129.51px;color:#000000;">TLSv1.3 Record Layer: Handshake Protocol: Server Hello</span>
<span class="m" style="left:126px;top:161.51px;color:#ffffff;">Content Type: Handshake (22)</span>
<span class="m" style="left:126px;top:193.51px;color:#ffffff;">Version: TLS 1.2 (0x0303)</span>
<span class="m" style="left:126px;top:225.51px;color:#ffffff;">Length: 122</span>
<div style="left:120px;top:256px;width:1300px;height:32px;background:#7cb5f6;"></div>
<svg style="left:96px;top:262.6px" width="9" height="17" viewBox="0 0 9 17"><path d="M0.2 0.4 L8.8 8.5 L0.2 16.6 Z" fill="#b4b4b4"/></svg>
<span class="m" style="left:126px;top:257.51px;color:#000000;">Handshake Protocol: Server Hello</span>
<svg style="left:52px;top:299.2px" width="17" height="9" viewBox="0 0 17 9"><path d="M0.4 0.3 H16.6 L8.5 8.7 Z" fill="#b4b4b4"/></svg>
<span class="m" style="left:86px;top:289.51px;color:#ffffff;">TLSv1.3 Record Layer: Change Cipher Spec Protocol: Change Cipher Spec</span>
<div style="left:0px;top:320px;width:120px;height:32px;background:#e4251b;"></div>
<div style="left:120px;top:320px;width:1300px;height:32px;background:#e8372e;"></div>
<span class="m" style="left:126px;top:321.51px;color:#fdeeee;">Content Type: Change Cipher Spec (20)</span>
<span class="m" style="left:126px;top:353.51px;color:#ffffff;">Version: TLS 1.2 (0x0303)</span>
<span class="m" style="left:126px;top:385.51px;color:#ffffff;">Length: 1</span>
<span class="m" style="left:126px;top:417.51px;color:#ffffff;">Change Cipher Spec Message</span>
<span class="m" style="left:86px;top:449.51px;color:#ffffff;">TLS segment data (1319 bytes)</span>
</div>
<div style="left:1245.6px;top:767px;width:26px;height:503px;background:#464646;"></div>
<div style="left:1245.6px;top:767px;width:1px;height:503px;background:#3a3a3a;"></div>
<div style="left:1245.6px;top:767px;width:26px;height:25px;background:#4c4c4c;border:1px solid #5c5c5c;"></div>
<svg style="left:1250.6px;top:775px" width="17" height="9" viewBox="0 0 17 9"><path d="M8.5 0.3 L16.6 8.6 H0.4 Z" fill="#c8c8c8"/></svg>
<div style="left:1245.6px;top:1245px;width:26px;height:25px;background:#4c4c4c;border:1px solid #5c5c5c;"></div>
<svg style="left:1250.6px;top:1253.5px" width="17" height="9" viewBox="0 0 17 9"><path d="M8.5 8.7 L16.6 0.4 H0.4 Z" fill="#c8c8c8"/></svg>
<div style="left:1245.6px;top:792px;width:26px;height:2px;background:#1e1e1e;"></div>
<div style="left:1245.6px;top:1243px;width:26px;height:2px;background:#1e1e1e;"></div>
<div style="left:1245.6px;top:820px;width:26px;height:2px;background:#1e1e1e;"></div>
<div style="left:1245.6px;top:1241px;width:26px;height:2px;background:#1e1e1e;"></div>
<div style="left:1245.6px;top:822px;width:26px;height:419px;background:#4c4c4c;border:1px solid #5c5c5c;"></div>
<div style="left:2px;top:1272px;width:1241.4px;height:26.6px;background:#464646;"></div>
<div style="left:2px;top:1272px;width:26px;height:26.6px;background:#4c4c4c;border:1px solid #5c5c5c;"></div>
<svg style="left:10px;top:1277px" width="9" height="17" viewBox="0 0 9 17"><path d="M0.3 8.5 L8.6 0.4 V16.6 Z" fill="#c8c8c8"/></svg>
<div style="left:1217.4px;top:1272px;width:26px;height:26.6px;background:#4c4c4c;border:1px solid #5c5c5c;"></div>
<svg style="left:1226.4px;top:1277px" width="9" height="17" viewBox="0 0 9 17"><path d="M8.7 8.5 L0.4 0.4 V16.6 Z" fill="#c8c8c8"/></svg>
<div style="left:28px;top:1272px;width:2px;height:26.6px;background:#1e1e1e;"></div>
<div style="left:1215.4px;top:1272px;width:2px;height:26.6px;background:#1e1e1e;"></div>
<div style="left:27px;top:1272px;width:2px;height:26.6px;background:#1e1e1e;"></div>
<div style="left:720px;top:1272px;width:2px;height:26.6px;background:#1e1e1e;"></div>
<div style="left:29px;top:1272px;width:691px;height:26.6px;background:#4c4c4c;border:1px solid #5c5c5c;"></div>
<div style="left:1244px;top:1272px;width:30px;height:28px;background:#1e1e1e;"></div>
<div style="left:1278.4px;top:1019.5px;width:3.4px;height:3.6px;background:#5e5e5e;"></div>
<div style="left:1278.4px;top:1025.3px;width:3.4px;height:3.6px;background:#5e5e5e;"></div>
<div style="left:1278.4px;top:1031.1px;width:3.4px;height:3.6px;background:#5e5e5e;"></div>
<div style="left:1278.4px;top:1036.9px;width:3.4px;height:3.6px;background:#5e5e5e;"></div>
<div style="left:1278.4px;top:1042.7px;width:3.4px;height:3.6px;background:#5e5e5e;"></div>
<div style="left:1278.4px;top:1048.5px;width:3.4px;height:3.6px;background:#5e5e5e;"></div>
<div style="left:1283px;top:767px;width:1248px;height:532px;background:#2b2b2b;"></div>
<div style="left:1283px;top:767px;width:87px;height:532px;background:#212121;"></div>
<div style="left:1382.3px;top:767px;width:688.2px;height:511px;background:#1e1e1e;"></div>
<div style="left:2112px;top:767px;width:244px;height:511px;background:#1e1e1e;"></div>
<div style="left:1597.85px;top:767px;width:29.58px;height:30px;background:#e8251c;"></div>
<div style="left:2182.45px;top:767px;width:15.29px;height:30px;background:#e8251c;"></div>
<span class="m" style="left:1298px;top:768.81px;color:#cdcdcd;">00b0</span>
<span class="m" style="left:1384.3px;top:768.81px;color:#ffffff;">2b 00 02 03 04 14 03 03  00 01 01 17 03 03 0a cb</span>
<span class="m" style="left:2112.4px;top:768.81px;color:#ffffff;">+······· ········</span>
<span class="m" style="left:1298px;top:798.81px;color:#808080;">00c0</span>
<span class="m" style="left:1384.3px;top:798.81px;color:#ffffff;">f4 df 8f 84 25 c7 f2 28  ae 9c c9 ea 31 95 c0 c7</span>
<span class="m" style="left:2112.4px;top:798.81px;color:#ffffff;">····%··( ····1···</span>
<span class="m" style="left:1298px;top:828.81px;color:#808080;">00d0</span>
<span class="m" style="left:1384.3px;top:828.81px;color:#ffffff;">21 22 25 53 0e 26 65 26  77 77 c5 3a 1f 1b 27 24</span>
<span class="m" style="left:2112.4px;top:828.81px;color:#ffffff;">!"%S·&amp;e&amp; ww·:··'$</span>
<span class="m" style="left:1298px;top:858.81px;color:#808080;">00e0</span>
<span class="m" style="left:1384.3px;top:858.81px;color:#ffffff;">11 e7 ca e3 a0 bf 99 ce  e2 18 1d 89 2f 86 1a 6d</span>
<span class="m" style="left:2112.4px;top:858.81px;color:#ffffff;">········ ····/··m</span>
<span class="m" style="left:1298px;top:888.81px;color:#808080;">00f0</span>
<span class="m" style="left:1384.3px;top:888.81px;color:#ffffff;">fd 96 9b 34 b9 31 0e 5b  d8 3c 02 14 af 86 e1 97</span>
<span class="m" style="left:2112.4px;top:888.81px;color:#ffffff;">···4·1·[ ·&lt;······</span>
<span class="m" style="left:1298px;top:918.81px;color:#808080;">0100</span>
<span class="m" style="left:1384.3px;top:918.81px;color:#ffffff;">ed f1 82 03 aa fe f1 96  41 71 09 71 de ae ec 9c</span>
<span class="m" style="left:2112.4px;top:918.81px;color:#ffffff;">········ Aq·q····</span>
<span class="m" style="left:1298px;top:948.81px;color:#808080;">0110</span>
<span class="m" style="left:1384.3px;top:948.81px;color:#ffffff;">48 25 82 1f b9 26 7b c4  9d be a3 6b 38 76 a6 12</span>
<span class="m" style="left:2112.4px;top:948.81px;color:#ffffff;">H%···&amp;{· ···k8v··</span>
<span class="m" style="left:1298px;top:978.81px;color:#808080;">0120</span>
<span class="m" style="left:1384.3px;top:978.81px;color:#ffffff;">59 c3 64 3d 3e ff a1 17  b7 5f e0 61 92 73 b4 9b</span>
<span class="m" style="left:2112.4px;top:978.81px;color:#ffffff;">Y·d=&gt;··· ·_·a·s··</span>
<span class="m" style="left:1298px;top:1008.81px;color:#808080;">0130</span>
<span class="m" style="left:1384.3px;top:1008.81px;color:#ffffff;">be 63 c5 a2 ba f3 f2 6e  3f 90 44 50 bc f7 03 f8</span>
<span class="m" style="left:2112.4px;top:1008.81px;color:#ffffff;">·c·····n ?·DP····</span>
<span class="m" style="left:1298px;top:1038.81px;color:#808080;">0140</span>
<span class="m" style="left:1384.3px;top:1038.81px;color:#ffffff;">a2 b7 2e 0e 97 18 43 64  05 04 a2 4f 2d 38 22 f9</span>
<span class="m" style="left:2112.4px;top:1038.81px;color:#ffffff;">··.···Cd ···O-8"·</span>
<span class="m" style="left:1298px;top:1068.81px;color:#808080;">0150</span>
<span class="m" style="left:1384.3px;top:1068.81px;color:#ffffff;">c1 73 fe d5 74 81 08 02  3b 63 6d 7b 29 5a 5c 2d</span>
<span class="m" style="left:2112.4px;top:1068.81px;color:#ffffff;">·s··t··· ;cm{)Z\-</span>
<span class="m" style="left:1298px;top:1098.81px;color:#808080;">0160</span>
<span class="m" style="left:1384.3px;top:1098.81px;color:#ffffff;">02 9f 03 c4 bb da 6f d7  17 4d ba 5e 99 00 6d f9</span>
<span class="m" style="left:2112.4px;top:1098.81px;color:#ffffff;">······o· ·M·^··m·</span>
<span class="m" style="left:1298px;top:1128.81px;color:#808080;">0170</span>
<span class="m" style="left:1384.3px;top:1128.81px;color:#ffffff;">a8 8a b3 df cf d1 55 79  98 10 66 54 c8 8e 6d bc</span>
<span class="m" style="left:2112.4px;top:1128.81px;color:#ffffff;">······Uy ··fT··m·</span>
<span class="m" style="left:1298px;top:1158.81px;color:#808080;">0180</span>
<span class="m" style="left:1384.3px;top:1158.81px;color:#ffffff;">f7 8a e4 d3 59 0b 11 82  aa ae 50 c6 ef 77 45 78</span>
<span class="m" style="left:2112.4px;top:1158.81px;color:#ffffff;">····Y··· ··P··wEx</span>
<span class="m" style="left:1298px;top:1188.81px;color:#808080;">0190</span>
<span class="m" style="left:1384.3px;top:1188.81px;color:#ffffff;">f5 da 12 90 b9 3b f5 25  17 e3 44 4f d6 d6 49 6f</span>
<span class="m" style="left:2112.4px;top:1188.81px;color:#ffffff;">·····;·% ··DO··Io</span>
<span class="m" style="left:1298px;top:1218.81px;color:#808080;">01a0</span>
<span class="m" style="left:1384.3px;top:1218.81px;color:#ffffff;">14 ab b3 e0 fc 7c 44 4f  41 cd 23 06 d4 ab 0b 68</span>
<span class="m" style="left:2112.4px;top:1218.81px;color:#ffffff;">·····|DO A·#····h</span>
<span class="m" style="left:1298px;top:1248.81px;color:#808080;">01b0</span>
<span class="m" style="left:1384.3px;top:1248.81px;color:#ffffff;">23 39 91 8a a0 7b 3a 25  76 a7 2c d0 a8 a3 43 94</span>
<span class="m" style="left:2112.4px;top:1248.81px;color:#ffffff;">#9···{:% v·,···C·</span>
<div style="left:2531px;top:767px;width:27px;height:531px;background:#464646;"></div>
<div style="left:2531px;top:767px;width:1px;height:531px;background:#3a3a3a;"></div>
<div style="left:2531px;top:767px;width:27px;height:25px;background:#4c4c4c;border:1px solid #5c5c5c;"></div>
<svg style="left:2536px;top:775px" width="17" height="9" viewBox="0 0 17 9"><path d="M8.5 0.3 L16.6 8.6 H0.4 Z" fill="#c8c8c8"/></svg>
<div style="left:2531px;top:1273px;width:27px;height:25px;background:#4c4c4c;border:1px solid #5c5c5c;"></div>
<svg style="left:2536px;top:1281.5px" width="17" height="9" viewBox="0 0 17 9"><path d="M8.5 8.7 L16.6 0.4 H0.4 Z" fill="#c8c8c8"/></svg>
<div style="left:2531px;top:792px;width:27px;height:2px;background:#1e1e1e;"></div>
<div style="left:2531px;top:1271px;width:27px;height:2px;background:#1e1e1e;"></div>
<div style="left:2531px;top:851.5px;width:27px;height:2px;background:#1e1e1e;"></div>
<div style="left:2531px;top:908px;width:27px;height:2px;background:#1e1e1e;"></div>
<div style="left:2531px;top:853.5px;width:27px;height:54.5px;background:#4c4c4c;border:1px solid #5c5c5c;"></div>
<div style="left:0px;top:1300px;width:2559px;height:44px;background:#1e1e1e;"></div>
<svg style="left:20px;top:1309px" width="28" height="28" viewBox="0 0 28 28"><circle cx="14" cy="13.9" r="12.9" fill="#e3e05e" stroke="#8e8c34" stroke-width="1.4"/></svg>
<svg style="left:66px;top:1307px" width="30" height="30" viewBox="0 0 30 30">
<path d="M1 2.5 H18 L22.4 7 V29.1 H1 Z" fill="#f3f3ee"/>
<path d="M1 2.5 H18 L22.4 7 V8.6 H1 Z" fill="#2aa2e2"/>
<path d="M5.4 8.6 C6.4 6.4 7.6 5 9 4.2 C8.4 5.8 8.4 7.2 8.8 8.6 Z" fill="#f3f3ee"/>
<path d="M18 2.5 L18 7 L22.4 7 Z" fill="#dcdcd6"/>
<g fill="#c4c4bc"><rect x="4" y="12.4" width="9" height="3"/><rect x="4" y="18" width="4" height="3"/><rect x="15" y="18" width="5" height="3"/><rect x="4" y="23.6" width="14.5" height="3"/></g>
<path d="M11.2 15.4 L22.6 2.6 a1.6 1.6 0 0 1 2.2 -0.2 L26.8 4.2 a1.6 1.6 0 0 1 0.2 2.2 L15.4 19.4 Z" fill="#5c5c5c"/>
<path d="M21.6 3.8 L25.9 7.6" stroke="#7a7a7a" stroke-width="1" fill="none"/>
<path d="M8.4 22 L11.2 15.4 L15.4 19.4 Z" fill="#0a0a0a"/>
</svg>
<span class="s" style="left:126px;top:1309.83px;font-size:23px;line-height:32px;color:#fff;letter-spacing:0.283px;">Content Type (tls.record.content_type), 1 byte</span>
<span class="s" style="left:1695px;top:1309.83px;font-size:23px;line-height:32px;color:#fff;letter-spacing:-0.135px;">Packets: 8410 · Displayed: 855 (10.2%) · Dropped: 0 (0.0%)</span>
<span class="s" style="left:2397px;top:1309.83px;font-size:23px;line-height:32px;color:#fff;letter-spacing:0.310px;">Profile: Default</span>
<div style="left:1669px;top:1306px;width:1px;height:34px;background:#2c2c2c;"></div>
<div style="left:2365px;top:1306px;width:1px;height:34px;background:#2c2c2c;"></div>
</body></html>
